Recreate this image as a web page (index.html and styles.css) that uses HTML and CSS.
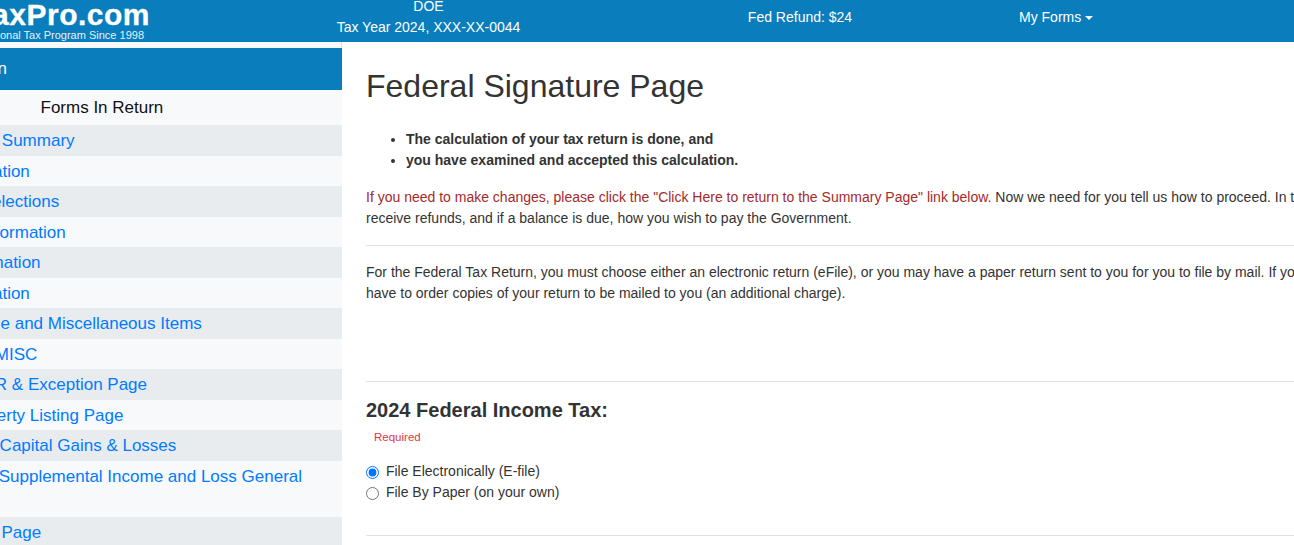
FILE: index.html
```html
<!DOCTYPE html>
<html lang="en">
<head>
    <meta charset="UTF-8">
    <meta name="viewport" content="width=device-width, initial-scale=1.0">
    <title>Federal Signature Page</title>
    <link rel="stylesheet" href="styles.css">
</head>
<body>
    <div class="page">
        <header class="topbar">
            <div class="logo">
                <div class="logo-name">TaxPro.com</div>
                <div class="logo-tag">Professional Tax Program Since 1998</div>
            </div>
            <div class="taxpayer">
                <div>DOE</div>
                <div>Tax Year 2024, XXX-XX-0044</div>
            </div>
            <div class="refund">Fed Refund: $24</div>
            <div class="forms-menu">My Forms<span class="caret"></span></div>
        </header>
        <div class="content">
            <aside class="sidebar">
                <div class="sidebar-gap"></div>
                <div class="sidebar-inner">
                    <div class="sidebar-head">Return</div>
                    <div class="sidebar-title">Forms In Return</div>
                    <ul class="side-list">
                        <li><a href="#">Your Return Summary</a></li>
                        <li><a href="#">Filer Information</a></li>
                        <li><a href="#">Taxpayer Selections</a></li>
                        <li><a href="#">Business Information</a></li>
                        <li><a href="#">Wage Information</a></li>
                        <li><a href="#">Filer Information</a></li>
                        <li><a href="#">Other Income and Miscellaneous Items</a></li>
                        <li><a href="#">Form 1099-MISC</a></li>
                        <li><a href="#">Form 1099-R &amp; Exception Page</a></li>
                        <li><a href="#">Rental Property Listing Page</a></li>
                        <li><a href="#">Schedule D Capital Gains &amp; Losses</a></li>
                        <li><a href="#">Schedule E Supplemental Income and Loss General Information</a></li>
                        <li><a href="#">Schedule M Page</a></li>
                    </ul>
                </div>
            </aside>
            <main class="main">
                <h1>Federal Signature Page</h1>
                <ul class="checks">
                    <li>The calculation of your tax return is done, and</li>
                    <li>you have examined and accepted this calculation.</li>
                </ul>
                <p class="para"><span class="warn">If you need to make changes, please click the "Click Here to return to the Summary Page" link below.</span> Now we need for you tell us how to proceed. In this section, you will tell us how you wish to<br>receive refunds, and if a balance is due, how you wish to pay the Government.</p>
                <hr>
                <p class="para">For the Federal Tax Return, you must choose either an electronic return (eFile), or you may have a paper return sent to you for you to file by mail. If you choose to file by mail, you will<br>have to order copies of your return to be mailed to you (an additional charge).</p>
                <hr class="rule-tax">
                <h2>2024 Federal Income Tax:</h2>
                <div class="required">Required</div>
                <label class="choice"><input type="radio" name="fed" checked> File Electronically (E-file)</label>
                <label class="choice"><input type="radio" name="fed"> File By Paper (on your own)</label>
                <hr class="rule-end">
            </main>
        </div>
    </div>
</body>
</html>
```
FILE: styles.css
```css
html, body {
    margin: 0;
    height: 100%;
    overflow: hidden;
}
body {
    font-family: "Liberation Sans", Arial, sans-serif;
    font-size: 14px;
    line-height: 21px;
    color: #333;
    background: white;
}
.page {
    height: 545px;
    overflow: hidden;
}
.topbar {
    display: flex;
    height: 42px;
    background: #0a7dbc;
    color: white;
    overflow: hidden;
}
.logo {
    width: 244px;
    margin-left: -94px;
    flex: none;
    text-align: right;
    white-space: nowrap;
}
.logo-name {
    font-size: 30px;
    font-weight: bold;
    letter-spacing: 0.5px;
    line-height: 30px;
    -webkit-text-stroke: 0.3px white;
}
.logo-tag {
    font-size: 11px;
    line-height: 11px;
    padding-right: 6px;
    color: #e6f1f8;
}
.taxpayer {
    width: 370px;
    margin-left: 93.5px;
    margin-top: -4px;
    text-align: center;
    flex: none;
}
.refund {
    width: 200px;
    margin-left: 86.5px;
    padding-top: 7px;
    text-align: center;
    flex: none;
}
.forms-menu {
    margin-left: 119px;
    padding-top: 7px;
}
.caret {
    display: inline-block;
    margin-left: 4px;
    vertical-align: 2px;
    border-top: 4px solid white;
    border-left: 4px solid transparent;
    border-right: 4px solid transparent;
}
.content {
    display: flex;
    height: 503px;
}
.sidebar {
    width: 342px;
    flex: none;
    background: #f8f9fa;
    overflow: hidden;
}
.sidebar-gap {
    height: 6px;
    border-right: 1px solid #dee2e6;
}
.sidebar-inner {
    width: 435px;
    margin-left: -93px;
}
.sidebar-head {
    height: 42px;
    line-height: 42px;
    font-size: 17px;
    background: #0a7dbc;
    color: white;
    padding-left: 49px;
}
.sidebar-title {
    height: 35px;
    line-height: 35px;
    font-size: 17px;
    color: #111;
    padding-left: 133.5px;
}
.side-list {
    list-style: none;
    margin: 0;
    padding: 0;
    font-size: 17px;
    line-height: 25.5px;
}
.side-list li {
    padding: 3px 0 2px;
}
.side-list li:nth-child(odd) {
    background: #e9ecef;
}
.side-list a {
    color: #007bff;
    text-decoration: none;
}
.main {
    flex: 1;
    min-width: 0;
    padding: 0 0 0 24px;
    overflow: hidden;
}
h1 {
    font-size: 32px;
    font-weight: normal;
    line-height: 38px;
    margin: 25px 0 24px;
    color: #333;
}
.checks {
    margin: 0 0 16px;
    padding-left: 40px;
    font-weight: bold;
}
.para {
    margin: 0;
    white-space: nowrap;
}
.warn {
    color: #a52a2a;
}
hr {
    border: none;
    border-top: 1px solid #dee2e6;
    margin: 16px 0;
}
.rule-tax {
    margin: 77px 0 16px;
}
h2 {
    font-size: 20px;
    line-height: 24px;
    margin: 0;
    color: #333;
}
.required {
    font-size: 11.5px;
    color: #dc3545;
    margin: 5px 0 13px 8px;
}
.choice {
    display: block;
    line-height: 21px;
}
.choice input {
    margin: 0 3px 0 0;
    vertical-align: -3px;
}
.rule-end {
    margin: 32px 0 0;
}
```
